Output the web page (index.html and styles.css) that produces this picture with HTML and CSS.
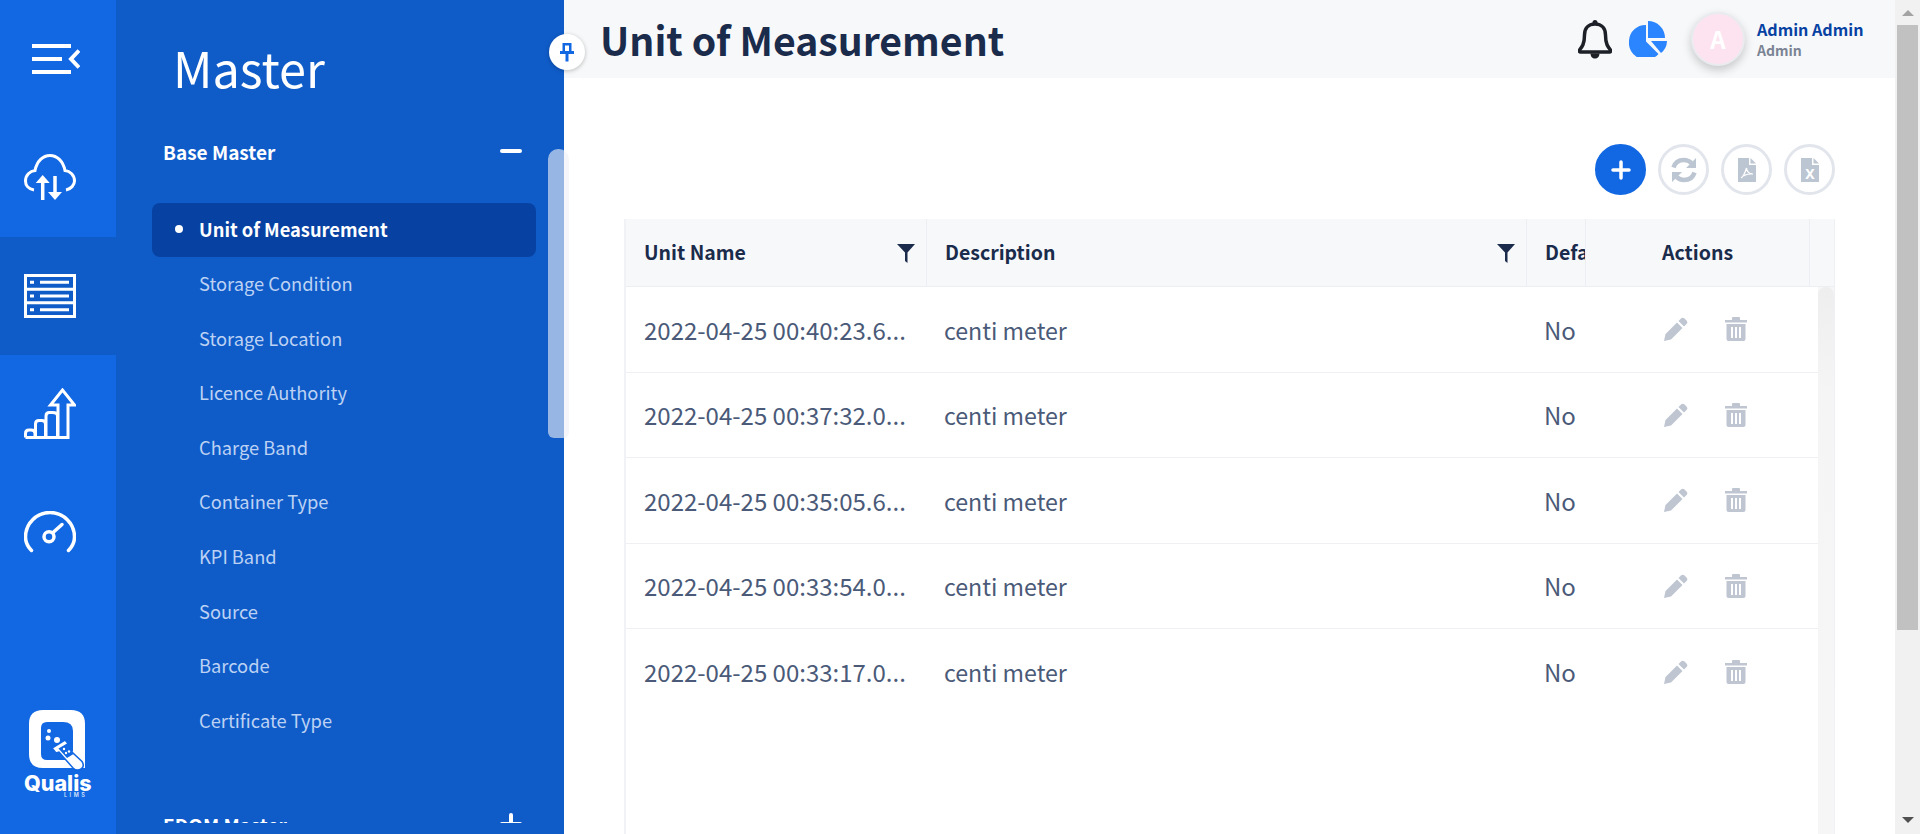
FILE: index.html
```html
<!DOCTYPE html>
<html lang="en">
<head>
<meta charset="utf-8">
<title>Unit of Measurement</title>
<link rel="stylesheet" href="styles.css">
</head>
<body>
<div class="app">
  <nav class="rail">
    <div class="rail-item rail-toggle">
      <svg class="ic-menu" viewBox="0 0 48 30"><path d="M0 2h39M0 15h30M0 28h39" /><path d="M47 6.500l-8 8.500 8 8.500" /></svg>
    </div>
    <div class="rail-item">
      <svg class="ic-rail ic-cloud" viewBox="0 0 52 46"><path d="M10 36C4 35 1.500 31 1.500 27 1.500 21 6 17 11 16.500 13 7 19 1.500 26 1.500 33 1.500 39 7 41 16.500 46 17 50.500 21 50.500 27 50.500 31 47 35 42 36"/><path d="M18.700 25V46M31 22V43"/><path class="fill" d="M18.700 21l7 8h-14zM31 46l7-8H24z"/></svg>
    </div>
    <div class="rail-item active">
      <svg class="ic-rail ic-server" viewBox="0 0 52 44"><rect x="1.500" y="1.500" width="49" height="41"/><path d="M1 15.200h50M1 28.800h50"/><path class="thin" d="M16 8.300h29M16 22h29M16 35.700h29M6 8.300h4M6 22h4M6 35.700h4"/></svg>
    </div>
    <div class="rail-item">
      <svg class="ic-rail ic-chart" viewBox="0 0 52 52"><path d="M1.500 49.500h44M1.500 49.500v-4q0-3.500 3.500-3.500h2q4 0 4 3.500v4M11.500 49.500V36q0-3.500 3.500-3.500h2.500q4 0 4 3.500v13.500M22 49.500V28q0-3.500 3.500-3.500h3q5 0 5 3.500v21.500M34 49.500V17h-7.500L38.500 2 50.500 17h-6.500v32.500"/></svg>
    </div>
    <div class="rail-item">
      <svg class="ic-rail ic-gauge" viewBox="0 0 52 42"><path class="round" d="M7.500 39.500C3.500 35.500 1.500 31 1.500 26a24.500 24.500 0 0 1 49 0C50.500 31 48.500 35.500 44.500 39.500"/><circle cx="25" cy="25.700" r="5"/><path class="round" d="M29 21.500l9-8"/></svg>
    </div>
    <div class="rail-logo">
      <svg class="logo-mark" viewBox="0 0 64 64">
        <path class="logo-bg" d="M14 0h28q14 0 14 14v44H14Q0 58 0 44V14Q0 0 14 0z"/>
        <path class="logo-in" d="M18 12h16q10 0 10 9v20l-7 9H18q-6 0-6-6V18q0-6 6-6z"/>
        <circle class="logo-bg" cx="20" cy="21" r="2"/><circle class="logo-bg" cx="19" cy="28" r="2.500"/><circle class="logo-bg" cx="28" cy="30" r="3"/>
        <path class="logo-tube" d="M23 38l13-8 3 3.500-3 2 17 16q3 5-1 7.500t-8-1L30 42l-3 1z"/>
        <path class="logo-in" d="M29.500 38.500l6-3.500 9 9-6.500 4z"/>
        <circle class="logo-bg" cx="35" cy="39" r="1.200"/><circle class="logo-bg" cx="37" cy="43" r="1.200"/><circle class="logo-bg" cx="40" cy="41.500" r="1.200"/>
      </svg>
      <div class="logo-name">Qualis</div>
      <div class="logo-sub">LIMS</div>
    </div>
  </nav>

  <aside class="panel">
    <h2 class="panel-title">Master</h2>
    <div class="panel-scroll">
      <div class="group-head"><span>Base Master</span><i class="minus"></i></div>
      <ul class="menu">
        <li class="current"><i class="dot"></i>Unit of Measurement</li>
        <li>Storage Condition</li>
        <li>Storage Location</li>
        <li>Licence Authority</li>
        <li>Charge Band</li>
        <li>Container Type</li>
        <li>KPI Band</li>
        <li>Source</li>
        <li>Barcode</li>
        <li>Certificate Type</li>
      </ul>
      <div class="group-head group-next"><span>EDOM Master</span><i class="minus plus"></i></div>
    </div>
    <div class="panel-thumb"></div>
    <button class="pin" aria-label="Pin">
      <svg viewBox="0 0 16 20"><path d="M3.500 1h9v9h-2.500V3.500H6V10H3.500z"/><path d="M1 9h14v3H1z"/><path d="M6.500 11h3v8.500h-3z"/></svg>
    </button>
  </aside>

  <main class="main">
    <header class="topbar">
      <h1 class="page-title">Unit of Measurement</h1>
      <div class="top-right">
        <svg class="ic-bell" viewBox="0 0 34 40"><path d="M17 5C10 5 6.500 10 6.500 16c0 9-2.500 12-5 15-.6.800-.2 2 1 2h29c1.200 0 1.600-1.200 1-2-2.500-3-5-6-5-15C27.500 10 24 5 17 5z"/><path class="bell-fill" d="M14.500 3.500a2.500 2.500 0 0 1 5 0V6h-5zM12.500 34.500h9c0 3-2 5-4.500 5s-4.500-2-4.500-5z"/></svg>
        <svg class="ic-pie" viewBox="0 0 38 36"><path d="M17 4V20.500L29.500 33A17 17 0 0 1 0 19.500 16.500 16.500 0 0 1 17 4z"/><path d="M19 0A17 17 0 0 1 36 17H19z"/><path d="M22 20h16a16 16 0 0 1-6 12z"/></svg>
        <div class="avatar">A</div>
        <div class="user">
          <div class="user-name">Admin Admin</div>
          <div class="user-role">Admin</div>
        </div>
      </div>
    </header>

    <section class="content">
      <div class="toolbar">
        <button class="tool primary" aria-label="Add"><svg viewBox="0 0 20 20"><path d="M10 2v16M2 10h16"/></svg></button>
        <button class="tool" aria-label="Refresh"><svg class="ic-sync" viewBox="0 0 26 26"><path d="M2.500 10.500C4 5.500 8 3 13 3c3 0 5.500 1.200 7.500 3"/><path d="M23.500 15.500C22 20.500 18 23 13 23c-3 0-5.500-1.200-7.500-3"/><path class="fill" d="M25 1v10h-10zM1 25V15h10z"/></svg></button>
        <button class="tool" aria-label="PDF"><svg class="ic-file" viewBox="0 0 18 24"><path d="M0 0h11v7h7v17H0z"/><path d="M12.500 0L18 5.500h-5.500z"/><path class="squiggle" d="M3 20c2-1 4-5 5.500-10 .5 4 3 6 6.500 6-3-.5-8 .5-9 2"/></svg></button>
        <button class="tool" aria-label="Excel"><svg class="ic-file" viewBox="0 0 18 24"><path d="M0 0h11v7h7v17H0z"/><path d="M12.500 0L18 5.500h-5.500z"/><text class="file-x" x="9" y="21">X</text></svg></button>
      </div>

      <div class="grid">
        <div class="grid-head">
          <div class="th"><span>Unit Name</span><svg class="ic-filter" viewBox="0 0 18 19"><path d="M0 0h18l-7.500 8.500V19l-2.500-2V8.500z"/></svg></div>
          <div class="th"><span>Description</span><svg class="ic-filter" viewBox="0 0 18 19"><path d="M0 0h18l-7.500 8.500V19l-2.500-2V8.500z"/></svg></div>
          <div class="th th-clip"><span>Default</span></div>
          <div class="th th-actions"><span>Actions</span></div>
          <div class="th th-end"></div>
        </div>
        <div class="grid-body">
          <div class="rows">
            <div class="row"><div class="td">2022-04-25 00:40:23.6...</div><div class="td td-desc">centi meter</div><div class="td td-def">No</div><div class="td-actions"><svg class="ic-edit" viewBox="0 0 24 24"><path d="M17 1.500a2.500 2.500 0 0 1 3.500 0l2 2a2.500 2.500 0 0 1 0 3.500L20 9.500 14.500 4zM13 5.500L18.500 11 7 22.500 0 24l1.500-7z"/></svg><svg class="ic-trash" viewBox="0 0 22 24"><path d="M0 3h7V1q0-1 1-1h6q1 0 1 1v2h7v2.500H0z"/><path fill-rule="evenodd" d="M1.500 7h19v15q0 2-2 2h-15q-2 0-2-2zM6 10v11h2V10zM10 10v11h2V10zM14 10v11h2V10z"/></svg></div></div>
            <div class="row"><div class="td">2022-04-25 00:37:32.0...</div><div class="td td-desc">centi meter</div><div class="td td-def">No</div><div class="td-actions"><svg class="ic-edit" viewBox="0 0 24 24"><path d="M17 1.500a2.500 2.500 0 0 1 3.500 0l2 2a2.500 2.500 0 0 1 0 3.500L20 9.500 14.500 4zM13 5.500L18.500 11 7 22.500 0 24l1.500-7z"/></svg><svg class="ic-trash" viewBox="0 0 22 24"><path d="M0 3h7V1q0-1 1-1h6q1 0 1 1v2h7v2.500H0z"/><path fill-rule="evenodd" d="M1.500 7h19v15q0 2-2 2h-15q-2 0-2-2zM6 10v11h2V10zM10 10v11h2V10zM14 10v11h2V10z"/></svg></div></div>
            <div class="row"><div class="td">2022-04-25 00:35:05.6...</div><div class="td td-desc">centi meter</div><div class="td td-def">No</div><div class="td-actions"><svg class="ic-edit" viewBox="0 0 24 24"><path d="M17 1.500a2.500 2.500 0 0 1 3.500 0l2 2a2.500 2.500 0 0 1 0 3.500L20 9.500 14.500 4zM13 5.500L18.500 11 7 22.500 0 24l1.500-7z"/></svg><svg class="ic-trash" viewBox="0 0 22 24"><path d="M0 3h7V1q0-1 1-1h6q1 0 1 1v2h7v2.500H0z"/><path fill-rule="evenodd" d="M1.500 7h19v15q0 2-2 2h-15q-2 0-2-2zM6 10v11h2V10zM10 10v11h2V10zM14 10v11h2V10z"/></svg></div></div>
            <div class="row"><div class="td">2022-04-25 00:33:54.0...</div><div class="td td-desc">centi meter</div><div class="td td-def">No</div><div class="td-actions"><svg class="ic-edit" viewBox="0 0 24 24"><path d="M17 1.500a2.500 2.500 0 0 1 3.500 0l2 2a2.500 2.500 0 0 1 0 3.500L20 9.500 14.500 4zM13 5.500L18.500 11 7 22.500 0 24l1.500-7z"/></svg><svg class="ic-trash" viewBox="0 0 22 24"><path d="M0 3h7V1q0-1 1-1h6q1 0 1 1v2h7v2.500H0z"/><path fill-rule="evenodd" d="M1.500 7h19v15q0 2-2 2h-15q-2 0-2-2zM6 10v11h2V10zM10 10v11h2V10zM14 10v11h2V10z"/></svg></div></div>
            <div class="row"><div class="td">2022-04-25 00:33:17.0...</div><div class="td td-desc">centi meter</div><div class="td td-def">No</div><div class="td-actions"><svg class="ic-edit" viewBox="0 0 24 24"><path d="M17 1.500a2.500 2.500 0 0 1 3.500 0l2 2a2.500 2.500 0 0 1 0 3.500L20 9.500 14.500 4zM13 5.500L18.500 11 7 22.500 0 24l1.500-7z"/></svg><svg class="ic-trash" viewBox="0 0 22 24"><path d="M0 3h7V1q0-1 1-1h6q1 0 1 1v2h7v2.500H0z"/><path fill-rule="evenodd" d="M1.500 7h19v15q0 2-2 2h-15q-2 0-2-2zM6 10v11h2V10zM10 10v11h2V10zM14 10v11h2V10z"/></svg></div></div>
          </div>
          <div class="grid-scroll"><div class="grid-thumb"></div></div>
        </div>
      </div>
    </section>
  </main>

  <div class="scrollbar">
    <i class="arrow arrow-up"></i>
    <div class="scroll-thumb"></div>
    <i class="arrow arrow-down"></i>
  </div>
</div>
</body>
</html>
```
FILE: styles.css
```css
* { box-sizing: border-box; }
html, body { margin: 0; height: 100%; overflow: hidden; }
body { font-family: "Noto Sans CJK SC", "Noto Sans", sans-serif; background: #fff; color: #1a2b4b; }
h1, h2, ul { margin: 0; padding: 0; }
ul { list-style: none; }
i { display: block; }
button { border: 0; padding: 0; font: inherit; cursor: pointer; }
svg { display: block; flex: none; }

.app { display: flex; height: 834px; width: 1920px; }

/* icon rail */
.rail { width: 116px; flex: none; background: #1267e2; display: flex; flex-direction: column; height: 834px; }
.rail-item { height: 118.300px; flex: none; display: flex; align-items: center; padding-left: 24px; }
.rail-item.active { background: #0f5cc9; }
.rail-toggle { padding-left: 32px; }
.ic-menu { width: 48px; height: 30px; fill: none; stroke: #fff; stroke-width: 4; }
.ic-rail { width: 52px; fill: none; stroke: #fff; stroke-width: 3; }
.ic-rail .fill { fill: #fff; stroke: none; }
.ic-rail .thin { stroke-width: 3; }
.ic-rail .round { stroke-linecap: round; stroke-width: 3.500; }
.ic-cloud { height: 46px; }
.ic-cloud path:nth-child(2) { stroke-width: 3.500; }
.ic-server { height: 44px; }
.ic-chart { height: 52px; }
.ic-gauge { height: 42px; }
.ic-gauge circle { stroke-width: 3.500; }

.rail-logo { margin-top: auto; padding: 0 0 36px 24px; width: 116px; }
.logo-mark { width: 64px; height: 64px; margin-left: 5px; }
.logo-bg { fill: #fff; }
.logo-in { fill: #1267e2; }
.logo-tube { fill: #fff; stroke: #1267e2; stroke-width: 1.500; }
.logo-name { font-family: Inter, sans-serif; font-weight: 800; font-size: 21.500px; line-height: 16px; color: #fff; margin-top: 1px; width: 72px; }
.logo-sub { font-family: Inter, sans-serif; font-weight: 600; font-size: 5.500px; line-height: 6px; color: #d8e5fb; letter-spacing: 2.500px; margin: 1px 0 0 40px; }

/* master panel */
.panel { width: 448px; flex: none; background: #0f5cc9; height: 834px; position: relative; display: flex; flex-direction: column; color: #fff; }
.panel-title { font-weight: 400; font-size: 48.600px; line-height: 70px; padding: 32px 0 0 57px; height: 104px; }
.panel-scroll { height: 719px; overflow: hidden; padding: 30px 0 0 47px; }
.group-head { display: flex; justify-content: space-between; align-items: center; font-weight: 700; font-size: 19px; line-height: 36px; height: 36px; padding-right: 42px; }
.minus { width: 22px; height: 4px; border-radius: 2px; background: #fff; position: relative; margin-top: -3px; }
.plus::after { content: ""; position: absolute; left: 9px; top: -9px; width: 4px; height: 22px; background: #fff; border-radius: 2px; }
.menu { margin: 33px 28px 0 -11px; }
.menu li { height: 54.600px; line-height: 52px; padding-left: 47px; font-size: 18.300px; color: #bdd2f3; position: relative; }
.menu .current { color: #fff; font-weight: 700; background: #0742a3; border-radius: 8px; height: 54px; }
.dot { position: absolute; left: 23px; top: 22px; width: 8px; height: 8px; border-radius: 50%; background: #fff; }
.group-next { margin-top: 59px; }
.panel-thumb { position: absolute; left: 432px; top: 149px; width: 21px; height: 289px; border-radius: 10px 10px 6px 6px; background: rgba(238,240,245,.61); }
.pin { position: absolute; left: 433px; top: 34px; width: 36px; height: 36px; border-radius: 50%; background: #fff; box-shadow: 0 1px 4px rgba(0,0,0,.25); display: flex; align-items: center; justify-content: center; }
.pin svg { width: 16px; height: 20px; fill: #1267e2; }

/* main */
.main { flex: 1; min-width: 0; height: 834px; overflow: hidden; }
.topbar { height: 78px; background: #f7f8fa; display: flex; align-items: center; justify-content: space-between; padding: 0 0 0 36px; }
.page-title { font-size: 39.200px; font-weight: 600; line-height: 80px; color: #1a2b4b; }
.top-right { display: flex; align-items: center; width: 317px; }
.ic-bell { width: 34px; height: 40px; fill: none; stroke: #1d2026; stroke-width: 3.500; }
.bell-fill { fill: #1d2026; stroke: none; }
.ic-pie { width: 38px; height: 36px; fill: #2a85ff; margin: 0 0 0 17px; }
.avatar { width: 54px; height: 54px; border-radius: 50%; background: #fde3f0; border: 2px solid #e9ebee; box-shadow: 0 4px 10px rgba(0,0,0,.2); color: #fff; font-weight: 700; font-size: 24px; line-height: 50px; text-align: center; margin-left: 24px; }
.user { margin-left: 12px; }
.user-name { font-size: 16.100px; font-weight: 700; line-height: 22px; color: #0742a3; margin-top: -1px; }
.user-role { font-size: 14px; font-weight: 700; line-height: 20px; color: #7b8494; }

.content { padding: 66px 60px 0 60px; height: 756px; }
.toolbar { display: flex; justify-content: flex-end; gap: 12px; height: 75px; }
.tool { width: 51px; height: 51px; border-radius: 50%; background: #fff; border: 3px solid #e2e6ec; display: flex; align-items: center; justify-content: center; }
.tool.primary { background: #1267e2; border-color: #1267e2; }
.tool.primary svg { width: 20px; height: 20px; fill: none; stroke: #fff; stroke-width: 3.500; stroke-linecap: round; }
.ic-sync { width: 26px; height: 26px; fill: none; stroke: #bcc5d2; stroke-width: 4.500; }
.ic-sync .fill { fill: #bcc5d2; stroke: none; }
.ic-file { width: 18px; height: 24px; fill: #bcc5d2; }
.squiggle { fill: none; stroke: #fff; stroke-width: 1.200; }
.file-x { fill: #fff; font-family: "Noto Sans", sans-serif; font-weight: 700; font-size: 14px; text-anchor: middle; }

.grid { width: 1211px; height: 615px; border-left: 2px solid #f0f2f5; border-right: 1px solid #eef0f4; display: flex; flex-direction: column; }
.grid-head, .row { display: grid; grid-template-columns: 301px 600px 59px 224px; }
.grid-head { height: 68px; background: #f7f8fa; border-bottom: 1px solid #eceef3; grid-template-columns: 301px 600px 59px 224px 24px; }
.th { display: flex; align-items: center; justify-content: space-between; padding: 0 11px 2px 18px; border-right: 1px solid #eceef3; font-size: 19.500px; font-weight: 700; color: #1a2b4b; overflow: hidden; white-space: nowrap; }
.th-clip { padding-right: 0; }
.th-actions { padding-left: 76px; }
.th-end { border-right: 0; }
.ic-filter { width: 18px; height: 19px; fill: #1a2b4b; margin-top: 4px; }
.grid-body { display: flex; flex: 1; min-height: 0; }
.rows { width: 1193px; }
.row { height: 85.500px; border-bottom: 1px solid #eef0f4; align-items: center; color: #4a5a78; font-size: 24px; }
.row:last-child { border-bottom: 0; }
.td { padding: 1px 0 0 18px; white-space: nowrap; line-height: 30px; }
.td-desc { padding-left: 17px; font-size: 23.200px; }
.td-def { padding-left: 17px; }
.td-actions { display: flex; align-items: center; padding-left: 78px; }
.ic-edit { width: 24px; height: 24px; fill: #bfc6d2; }
.ic-trash { width: 22px; height: 24px; fill: #bfc6d2; margin-left: 37px; }
.grid-scroll { width: 16px; background: #f6f6f6; flex: none; }
.grid-thumb { height: 426px; border-radius: 8px 8px 0 0; background: linear-gradient(#eeeeee, #f5f5f5 25%, #f6f6f6); }

/* page scrollbar */
.scrollbar { width: 25px; flex: none; height: 834px; background: #f1f1f1; display: flex; flex-direction: column; align-items: center; }
.arrow { width: 0; height: 0; border-left: 6px solid transparent; border-right: 6px solid transparent; }
.arrow-up { border-bottom: 6px solid #a3a3a3; margin-top: 10px; }
.scroll-thumb { width: 21px; height: 605px; margin-top: 9px; background: #c1c1c1; }
.arrow-down { border-top: 6px solid #505050; margin-top: auto; margin-bottom: 11px; }
```
